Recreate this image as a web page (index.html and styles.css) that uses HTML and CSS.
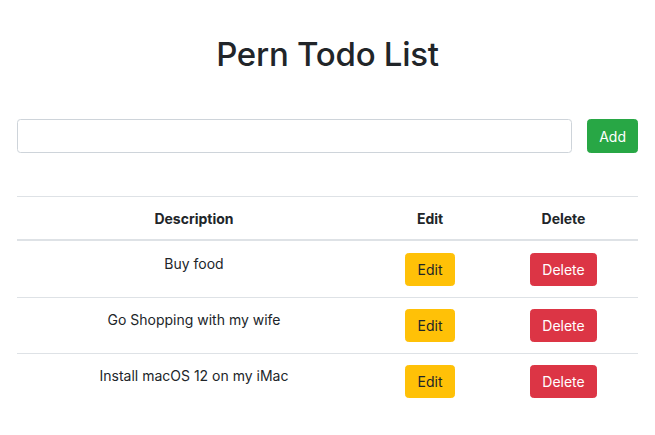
FILE: index.html
```html
<!DOCTYPE html>
<html lang="en">
<head>
<meta charset="utf-8">
<title>Pern Todo List</title>
<link rel="stylesheet" href="styles.css">
</head>
<body>
<div class="container">
  <h1 class="title">Pern Todo List</h1>
  <form class="add-form">
    <input class="form-control" type="text">
    <button class="btn btn-success" type="button">Add</button>
  </form>
  <table class="table">
    <colgroup>
      <col class="col-desc">
      <col class="col-edit">
      <col class="col-delete">
    </colgroup>
    <thead>
      <tr><th>Description</th><th>Edit</th><th>Delete</th></tr>
    </thead>
    <tbody>
      <tr>
        <td>Buy food</td>
        <td><button class="btn btn-warning" type="button">Edit</button></td>
        <td><button class="btn btn-danger" type="button">Delete</button></td>
      </tr>
      <tr>
        <td>Go Shopping with my wife</td>
        <td><button class="btn btn-warning" type="button">Edit</button></td>
        <td><button class="btn btn-danger" type="button">Delete</button></td>
      </tr>
      <tr>
        <td>Install macOS 12 on my iMac</td>
        <td><button class="btn btn-warning" type="button">Edit</button></td>
        <td><button class="btn btn-danger" type="button">Delete</button></td>
      </tr>
    </tbody>
  </table>
</div>
</body>
</html>
```
FILE: styles.css
```css
* { box-sizing: border-box; }
html, body { margin: 0; background: #fff; }
body {
  font-family: Inter, "Noto Sans", sans-serif;
  font-size: 14px;
  line-height: 21px;
  color: #212529;
}
.container {
  padding: 0 17px;
}
.title {
  margin: 34px 0 0;
  font-size: 33px;
  line-height: 40px;
  font-weight: 500;
  letter-spacing: -0.25px;
  text-align: center;
}
.add-form {
  display: flex;
  gap: 15px;
  margin-top: 45px;
}
.form-control {
  flex: 1;
  height: 34px;
  border: 1px solid #ced4da;
  border-radius: 3.5px;
  padding: 5px 10px;
  font: inherit;
}
.btn {
  display: inline-block;
  font: inherit;
  font-size: 14px;
  line-height: 21px;
  padding: 5px 11.5px;
  border: 1px solid transparent;
  border-radius: 3.5px;
  cursor: pointer;
}
.btn-success { background: #28a745; border-color: #28a745; color: #fff; padding: 5px 11px; }
.btn-warning { background: #ffc107; border-color: #ffc107; color: #212529; }
.btn-danger { background: #dc3545; border-color: #dc3545; color: #fff; }
.table {
  width: 100%;
  margin-top: 43px;
  border-collapse: collapse;
  table-layout: fixed;
  text-align: center;
}
.col-desc { width: 354px; }
.col-edit { width: 118px; }
.col-delete { width: 149px; }
.table th {
  font-weight: 700;
  padding: 11px 11px 10px;
  border-top: 1px solid #dee2e6;
  border-bottom: 2px solid #dee2e6;
}
.table td {
  padding: 11px;
  vertical-align: top;
  border-top: 1px solid #dee2e6;
}
.table tbody tr:first-child td { border-top: 0; padding-top: 12px; }
```
